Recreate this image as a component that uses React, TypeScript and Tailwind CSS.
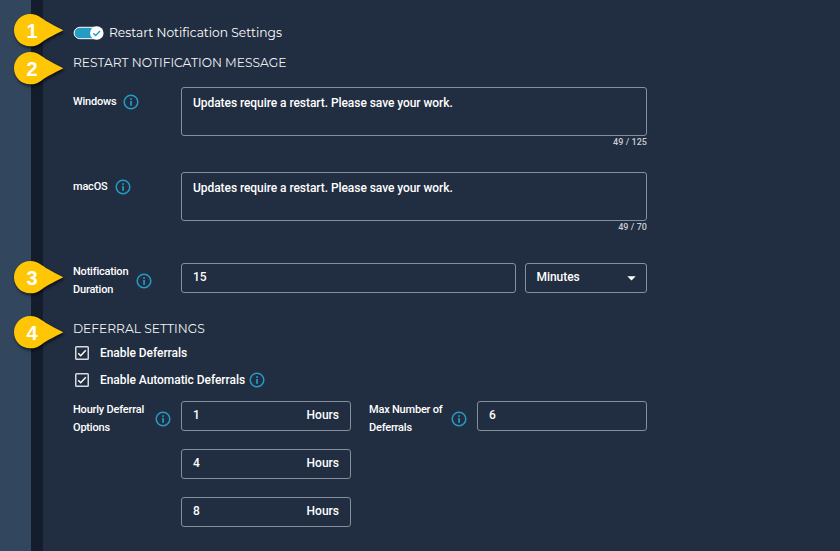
import React from "react";

function Info() {
  return (
    <svg width="16" height="16" viewBox="0 0 16 16" className="shrink-0">
      <circle cx="8" cy="8" r="6.8" fill="none" stroke="#259cc4" strokeWidth="1.5" />
      <rect x="7.2" y="7" width="1.7" height="4.8" fill="#259cc4" />
      <rect x="7.2" y="4.2" width="1.7" height="1.7" fill="#259cc4" />
    </svg>
  );
}

function Pin({ n, className }: { n: number; className: string }) {
  return (
    <div className={`absolute left-[14px] h-[34px] w-[50px] ${className}`}>
      <svg
        width="50"
        height="34"
        viewBox="0 0 50 34"
        className="absolute inset-0 overflow-visible drop-shadow-[1px_2px_1.5px_rgba(0,0,0,0.6)]"
      >
        <path
          d="M49.3 16.3 C40 11.5 34 8.5 27.5 4 C24 1.5 20.5 0 16.3 0 C7.3 0 0 7.3 0 16.2 C0 25.2 7.3 32.3 16.3 32.3 C20.5 32.3 24 31 27.5 28.4 C34 24 40 21 49.3 16.3 Z"
          fill="#ffc605"
        />
      </svg>
      <span className="absolute left-0 top-0 w-[36px] text-center font-['Liberation_Sans',sans-serif] text-[20px] font-bold leading-[34px] text-white">
        {n}
      </span>
    </div>
  );
}

function Heading({ children, className }: { children: string; className: string }) {
  return (
    <h2 className={`h-5 whitespace-nowrap font-['Montserrat','Noto_Sans',sans-serif] text-[12.25px] leading-5 text-[#f0f2f4] ${className}`}>
      {children}
    </h2>
  );
}

const box = "rounded-[3px] border border-[#85909e] text-[12px] font-medium text-white";

function Message({ label, count, className }: { label: string; count: string; className: string }) {
  return (
    <div className={`flex items-start ${className}`}>
      <div className="mt-[6px] flex w-[108px] items-center gap-[7px] text-[11px] font-medium leading-[18px] tracking-[-0.2px]">
        {label}
        <Info />
      </div>
      <div className="w-[466px]">
        <div className={`h-[49px] px-[11px] pt-[6px] leading-[18px] tracking-[-0.06px] ${box}`}>
          Updates require a restart. Please save your work.
        </div>
        <div className="h-3 text-right text-[9px] font-medium leading-3 tracking-[0.05px] text-[#c9cdd3]">{count}</div>
      </div>
    </div>
  );
}

function Check({ label, info, className }: { label: string; info?: boolean; className: string }) {
  return (
    <div className={`flex h-[18px] items-center pl-[2px] text-[12px] font-medium tracking-[-0.05px] ${className}`}>
      <svg width="14" height="14" viewBox="0 0 14 14" className="mr-[11px]">
        <rect x="0.75" y="0.75" width="12.5" height="12.5" rx="0.8" fill="none" stroke="#d6d9dd" strokeWidth="1.5" />
        <path d="M3.2 7.2 5.7 9.7 10.8 4.3" fill="none" stroke="#fff" strokeWidth="1.5" />
      </svg>
      <span className="mr-[4px]">{label}</span>
      {info && <Info />}
    </div>
  );
}

export default function App() {
  return (
    <div className="relative flex h-[551px] w-[840px] overflow-hidden bg-[#212d40] font-['Roboto',sans-serif] text-white">
      <div className="w-[31px] shrink-0 bg-[#32465e]" />
      <div className="w-3 shrink-0 bg-[#141d2b]" />
      <main className="flex-1 pl-[30px] pt-6">
        <div className="flex h-[18px] items-center">
          <svg width="31" height="14" viewBox="0 0 31 14" className="mr-[5px]">
            <rect x="1.1" y="1.3" width="28" height="11.4" rx="5.7" fill="#259cc4" stroke="#fff" strokeWidth="1" />
            <circle cx="23.8" cy="7" r="6.8" fill="#fff" />
            <path d="M20.3 7.3 22.7 9.5 27 4.9" fill="none" stroke="#259cc4" strokeWidth="1.4" />
          </svg>
          <span className="-mt-px whitespace-nowrap font-['Montserrat','Noto_Sans',sans-serif] text-[12.25px] leading-[18px]">
            Restart Notification Settings
          </span>
        </div>
        <Heading className="mt-[11px]">RESTART NOTIFICATION MESSAGE</Heading>
        <Message label="Windows" count="49 / 125" className="mt-[14px]" />
        <Message label="macOS" count="49 / 70" className="mt-6" />

        <div className="mt-[30px] flex h-[30px] items-start">
          <div className="flex w-[108px] items-center gap-[8px] text-[11px] font-medium leading-[18px] tracking-[-0.2px]">
            <span>Notification<br />Duration</span>
            <Info />
          </div>
          <div className={`h-[30px] w-[335px] px-[11px] leading-[27px] ${box}`}>15</div>
          <div className={`ml-[9px] flex h-[30px] w-[122px] items-center justify-between pl-[10.5px] pr-[10px] leading-[27px] ${box}`}>
            <span className="-mt-px tracking-[-0.05px]">Minutes</span>
            <svg width="9" height="5" viewBox="0 0 9 5" className="mt-px"><path d="M.3.3H8.7L4.5 4.5Z" fill="#fff" /></svg>
          </div>
        </div>

        <Heading className="mt-[26px]">DEFERRAL SETTINGS</Heading>
        <Check label="Enable Deferrals" className="mt-[5px]" />
        <Check label="Enable Automatic Deferrals" info className="mt-[9px]" />

        <div className="mt-3 flex items-start">
          <div className="flex w-[108px] items-center justify-between pr-[10px] text-[11px] font-medium leading-[18px] tracking-[-0.2px]">
            <span className="whitespace-nowrap">Hourly Deferral<br />Options</span>
            <Info />
          </div>
          <div className="flex flex-col gap-[18px]">
            {[1, 4, 8].map((n) => (
              <div key={n} className={`flex h-[30px] w-[170px] justify-between px-[11px] leading-[27px] ${box}`}>
                <span>{n}</span>
                <span>Hours</span>
              </div>
            ))}
          </div>
          <div className="ml-[18px] flex w-[108px] items-center justify-between pr-[10px] text-[11px] font-medium leading-[18px] tracking-[-0.2px]">
            <span className="whitespace-nowrap">Max Number of<br />Deferrals</span>
            <Info />
          </div>
          <div className={`h-[30px] w-[170px] px-[11px] leading-[27px] ${box}`}>6</div>
        </div>
      </main>
      <Pin n={1} className="top-[14px]" />
      <Pin n={2} className="top-[52px]" />
      <Pin n={3} className="top-[261px]" />
      <Pin n={4} className="top-[316px]" />
    </div>
  );
}
